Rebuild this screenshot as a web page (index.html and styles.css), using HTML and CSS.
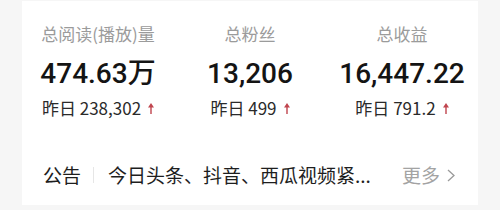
FILE: index.html
```html
<!DOCTYPE html>
<html lang="zh">
<head>
<meta charset="utf-8">
<link rel="stylesheet" href="styles.css">
</head>
<body>
<div class="card">
  <div class="stats">
    <div class="stat">
      <div class="label">总阅读(播放)量</div>
      <div class="value">474.63万</div>
      <div class="delta">昨日 238,302<svg class="up" viewBox="0 0 6 11" width="6" height="11"><path d="M3 0 L6 4.5 L3.7 4.5 L3.7 11 L2.3 11 L2.3 4.5 L0 4.5 Z"/></svg></div>
    </div>
    <div class="stat">
      <div class="label">总粉丝</div>
      <div class="value">13,206</div>
      <div class="delta">昨日 499<svg class="up" viewBox="0 0 6 11" width="6" height="11"><path d="M3 0 L6 4.5 L3.7 4.5 L3.7 11 L2.3 11 L2.3 4.5 L0 4.5 Z"/></svg></div>
    </div>
    <div class="stat">
      <div class="label">总收益</div>
      <div class="value">16,447.22</div>
      <div class="delta">昨日 791.2<svg class="up" viewBox="0 0 6 11" width="6" height="11"><path d="M3 0 L6 4.5 L3.7 4.5 L3.7 11 L2.3 11 L2.3 4.5 L0 4.5 Z"/></svg></div>
    </div>
  </div>
  <div class="notice">
    <span class="tag">公告</span>
    <span class="sep"></span>
    <span class="msg">今日头条、抖音、西瓜视频紧...</span>
    <span class="more">更多<svg class="chev" viewBox="0 0 8 13" width="8" height="13"><path d="M1 1 L7 6.5 L1 12" fill="none" stroke="#9a9a9a" stroke-width="1.3"/></svg></span>
  </div>
</div>
</body>
</html>
```

FILE: styles.css
```css
html, body {
  margin: 0;
  padding: 0;
}
body {
  background: #f6f6f6;
  width: 500px;
  height: 210px;
  overflow: hidden;
  font-family: "Noto Sans CJK SC", "Noto Sans", sans-serif;
}
.card {
  margin: 1px 22px 0;
  height: 204px;
  background: #ffffff;
  box-sizing: border-box;
  padding-top: 21px;
}
.stats {
  display: grid;
  grid-template-columns: repeat(3, 1fr);
}
.stat {
  display: flex;
  flex-direction: column;
  align-items: center;
}
.label {
  font-size: 17px;
  line-height: 24px;
  color: #9b9b9b;
}
.value {
  margin-top: 10px;
  font-family: Roboto, "Noto Sans CJK SC", sans-serif;
  font-weight: 500;
  font-size: 28px;
  line-height: 36px;
  color: #141414;
}
.delta {
  margin-top: 4px;
  font-size: 17px;
  line-height: 24px;
  color: #2a2a2a;
  display: flex;
  align-items: center;
}
.up {
  margin-left: 7px;
  fill: #c0454e;
}
.notice {
  margin-top: 42px;
  display: flex;
  align-items: center;
  padding-left: 21px;
  font-size: 19px;
  line-height: 26px;
  color: #1e1e1e;
}
.sep {
  width: 1px;
  height: 16px;
  background: #e6e6e6;
  margin: 0 14px 0 12px;
}
.msg {
  flex: 1;
}
.more {
  color: #a3a3a3;
  display: flex;
  align-items: center;
  margin-right: 23px;
}
.chev {
  margin-left: 7px;
}
```
